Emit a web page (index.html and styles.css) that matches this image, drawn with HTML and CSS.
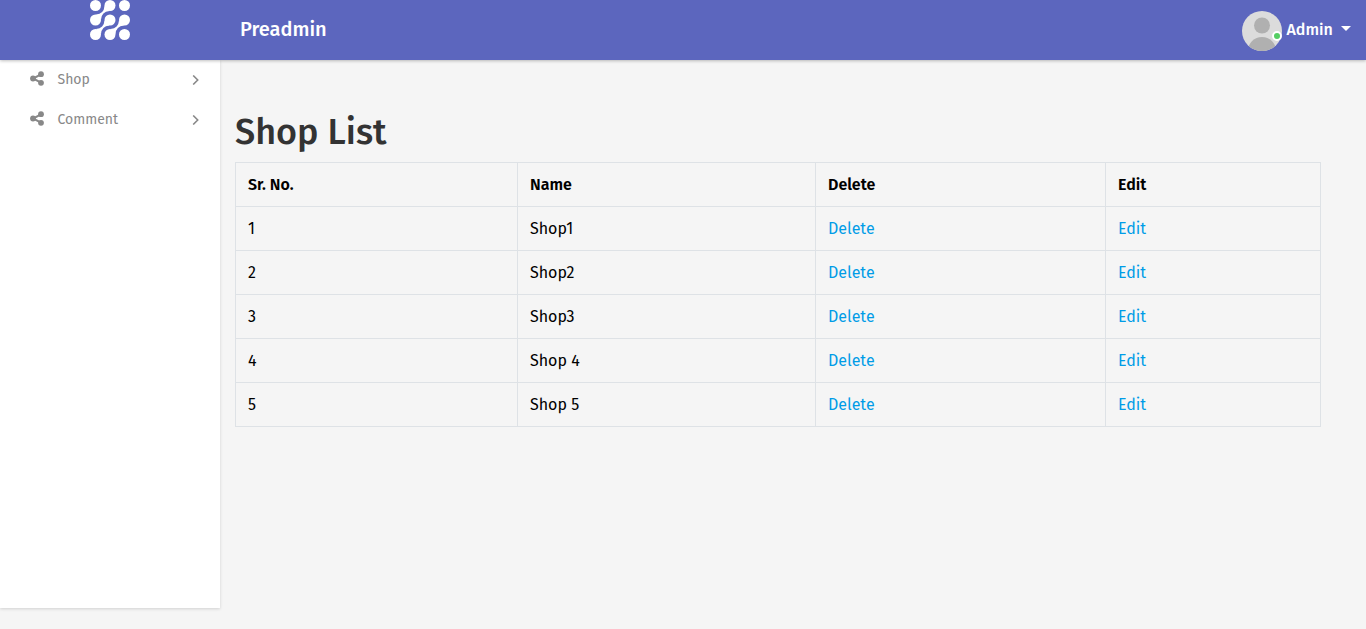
FILE: index.html
```html
<!DOCTYPE html>
<html lang="en">
<head>
<meta charset="utf-8">
<title>Preadmin</title>
<link rel="stylesheet" href="styles.css">
</head>
<body>
<header class="header">
  <a class="logo"><svg width="40" height="40" viewBox="0 0 40 40" fill="#fff">
    <circle cx="5.5" cy="5.5" r="5.5"/><circle cx="20" cy="5.5" r="5.5"/><circle cx="34.5" cy="5.5" r="5.5"/>
    <circle cx="5.5" cy="20" r="5.5"/><circle cx="20" cy="20" r="5.5"/><circle cx="34.5" cy="20" r="5.5"/>
    <circle cx="5.5" cy="34.5" r="5.5"/><circle cx="20" cy="34.5" r="5.5"/><circle cx="34.5" cy="34.5" r="5.5"/>
    <path d="M14.500 6Q14.200 10 12.100 12.100Q10 14.200 6 14.500L11 19.500Q11.300 15.500 13.400 13.400Q15.500 11.300 19.500 11Z"/>
    <path d="M14.500 20.500Q14.200 24.500 12.100 26.600Q10 28.700 6 29L11 34Q11.300 30 13.400 27.900Q15.500 25.800 19.500 25.500Z"/>
    <path d="M29 20.500Q28.700 24.500 26.600 26.600Q24.500 28.700 20.500 29L25.500 34Q25.800 30 27.900 27.900Q30 25.800 34 25.500Z"/>
  </svg></a>
  <h3 class="brand">Preadmin</h3>
  <div class="user">
    <span class="avatar">
      <svg width="40" height="40" viewBox="0 0 40 40"><defs><clipPath id="round"><circle cx="20" cy="20" r="20"/></clipPath></defs><g clip-path="url(#round)"><path fill="#dcdcdc" d="M0 0h40v40H0z"/><circle cx="20" cy="14.500" r="8" fill="#b0b0b0"/><ellipse cx="20" cy="40" rx="14" ry="14" fill="#b0b0b0"/></g></svg>
      <i class="status"></i>
    </span>
    <span class="user-name">Admin</span>
    <i class="caret"></i>
  </div>
</header>
<div class="layout">
  <nav class="sidebar">
    <a class="item"><svg class="share" width="14" height="15" viewBox="0 0 14 15"><path d="M11 3.300 3 7.500l8 4.200" fill="none" stroke="#888" stroke-width="2"/><g fill="#888"><circle cx="11" cy="3.200" r="2.900"/><circle cx="3" cy="7.500" r="2.900"/><circle cx="11" cy="11.800" r="2.900"/></g></svg><span class="label">Shop</span><svg class="arrow" width="8" height="10" viewBox="0 0 8 10"><path d="m1.200.5 4.500 4.500-4.500 4.500" fill="none" stroke="#888" stroke-width="1.600"/></svg></a>
    <a class="item"><svg class="share" width="14" height="15" viewBox="0 0 14 15"><path d="M11 3.300 3 7.500l8 4.200" fill="none" stroke="#888" stroke-width="2"/><g fill="#888"><circle cx="11" cy="3.200" r="2.900"/><circle cx="3" cy="7.500" r="2.900"/><circle cx="11" cy="11.800" r="2.900"/></g></svg><span class="label">Comment</span><svg class="arrow" width="8" height="10" viewBox="0 0 8 10"><path d="m1.200.5 4.500 4.500-4.500 4.500" fill="none" stroke="#888" stroke-width="1.600"/></svg></a>
  </nav>
  <main class="content">
    <h1 class="title">Shop List</h1>
    <table class="table">
      <colgroup><col class="c1"><col class="c2"><col class="c3"><col class="c4"></colgroup>
      <tr><th>Sr. No.</th><th>Name</th><th>Delete</th><th>Edit</th></tr>
      <tr><td>1</td><td>Shop1</td><td><a class="link">Delete</a></td><td><a class="link">Edit</a></td></tr>
      <tr><td>2</td><td>Shop2</td><td><a class="link">Delete</a></td><td><a class="link">Edit</a></td></tr>
      <tr><td>3</td><td>Shop3</td><td><a class="link">Delete</a></td><td><a class="link">Edit</a></td></tr>
      <tr><td>4</td><td>Shop 4</td><td><a class="link">Delete</a></td><td><a class="link">Edit</a></td></tr>
      <tr><td>5</td><td>Shop 5</td><td><a class="link">Delete</a></td><td><a class="link">Edit</a></td></tr>
    </table>
  </main>
</div>
</body>
</html>
```
FILE: styles.css
```css
* { box-sizing: border-box; }
body { margin: 0; height: 629px; overflow: hidden; background: #f5f5f5; color: #000; font: 16px/24px "Fira Sans", "Noto Sans", sans-serif; }
.header { position: relative; z-index: 1; display: flex; height: 60px; background: #5c66be; color: #fff; box-shadow: 0 1px 3px rgba(0,0,0,.25); }
.logo { width: 220px; height: 40px; display: flex; justify-content: center; }
.brand { margin: 0 auto 0 20px; font-size: 20px; line-height: 58px; font-weight: 500; }
.user { display: flex; align-items: center; width: 124px; height: 60px; font-weight: 500; }
.avatar { position: relative; width: 40px; height: 40px; margin: 2px 4.5px 0 0; }
.avatar svg { display: block; }
.status { position: absolute; right: 0; bottom: 10px; width: 10px; height: 10px; border: 2px solid #fff; border-radius: 50%; background: #55ce63; }
.user-name { width: 54.5px; }
.caret { border: 5px solid transparent; border-top-color: #fff; border-bottom: 0; margin-top: -3px; }
.layout { display: flex; align-items: flex-start; }
.sidebar { width: 220px; height: 548px; background: #fff; box-shadow: 0 1px 3px rgba(0,0,0,.15); }
.item { display: flex; align-items: center; height: 40px; padding: 0 20px 2px 30px; color: #888; font-size: 14px; }
.share { margin-top: -1px; }
.label { margin: 2px 0 0 13.5px; }
.arrow { margin: 2px 0 0 auto; }
.content { padding: 50px 0 0 15px; }
.title { margin: 0 0 8px; font-size: 36px; line-height: 44px; font-weight: 500; color: #333; }
.table { width: 1086px; table-layout: fixed; border-collapse: collapse; }
.c1 { width: 282px; }
.c2 { width: 298px; }
.c3 { width: 290px; }
.c4 { width: 215px; }
th, td { height: 44px; padding: 0 12px; border: 1px solid #dee2e6; text-align: left; }
th { font-weight: 600; }
.link { color: #009ce7; }
```
